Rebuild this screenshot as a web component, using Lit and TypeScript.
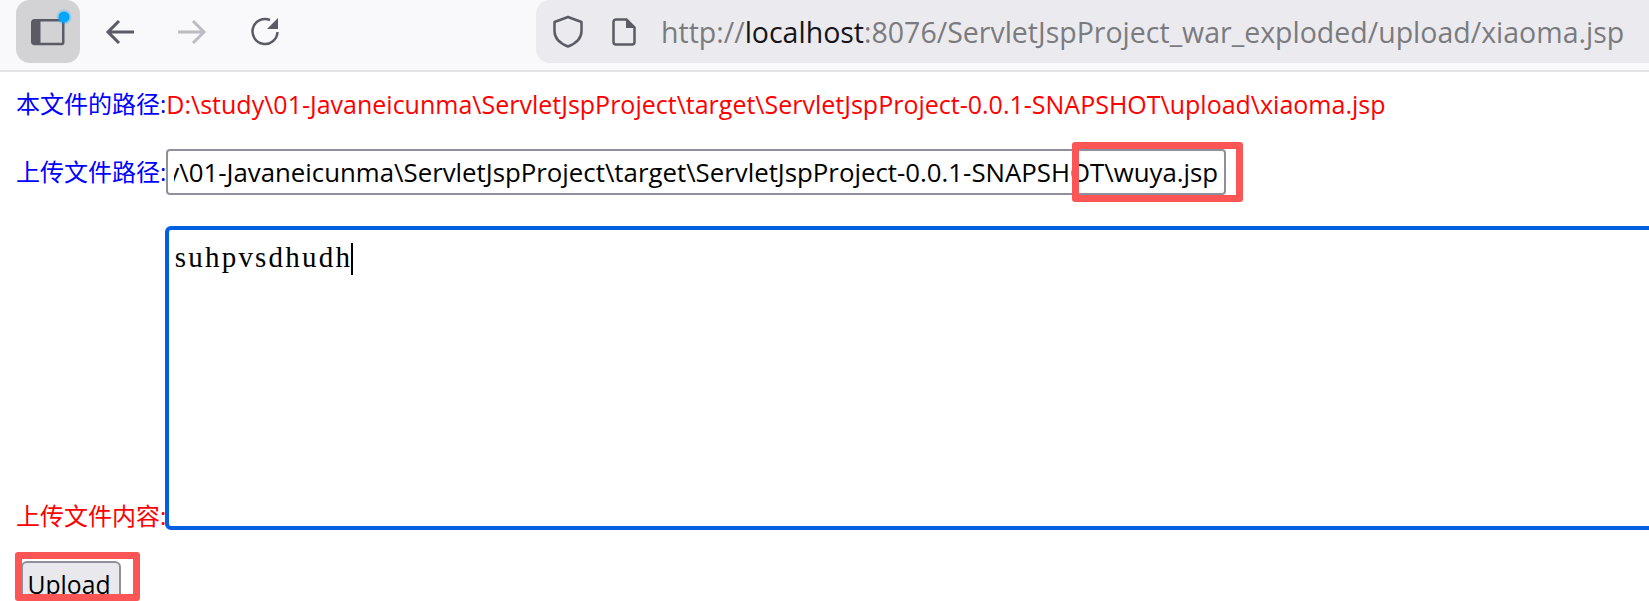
import { LitElement, css, html } from 'lit'
import { customElement, query } from 'lit/decorators.js'

const UPLOAD_PATH = 'D:\\study\\01-Javaneicunma\\ServletJspProject\\target\\ServletJspProject-0.0.1-SNAPSHOT\\wuya.jsp'

@customElement('app-root')
export class AppRoot extends LitElement {
  @query('.path-input')
  pathInput!: HTMLInputElement

  // the reference shows the end of the path, so scroll the field all the way
  firstUpdated() {
    this.pathInput.scrollLeft = this.pathInput.scrollWidth
  }

  render() {
    return html`
      <div class="toolbar">
        <div class="tab-btn">
          <svg width="64" height="63" viewBox="0 0 64 63">
            <path d="M18.500 20.250h28.750v22.250a1.500 1.500 0 0 1-1.500 1.500h-27a2.500 2.500 0 0 1-2.500-2.500v-19a2.500 2.500 0 0 1 2.250-2.250z" fill="none" stroke="#5b5b66" stroke-width="2.500"/>
            <path d="M18.500 20h6v24h-6a2.500 2.500 0 0 1-2.500-2.500v-19a2.500 2.500 0 0 1 2.500-2.500z" fill="#5b5b66"/>
            <circle cx="48" cy="17" r="7.500" fill="#00a6ff" opacity=".25"/>
            <circle cx="48" cy="17" r="5.500" fill="#00a6ff"/>
          </svg>
        </div>
        <svg class="nav back" width="30" height="28" viewBox="0 0 30 28">
          <path d="M29 14H4M14 3 3 14l11 11" fill="none" stroke="#5b5b66" stroke-width="3"/>
        </svg>
        <svg class="nav forward" width="30" height="28" viewBox="0 0 30 28">
          <path d="M1 14h25M16 3l11 11-11 11" fill="none" stroke="#bcbcc2" stroke-width="3"/>
        </svg>
        <svg class="nav reload" width="30" height="30" viewBox="0 0 30 30">
          <path d="M20 4A12.500 12.500 0 1 0 27.500 16" fill="none" stroke="#5b5b66" stroke-width="2.500"/>
          <path d="M28 2v11H17z" fill="#5b5b66"/>
        </svg>
        <div class="urlbar">
          <svg class="shield" width="30" height="33" viewBox="0 0 30 33">
            <path d="M15 2 28.500 7v9c0 7.500-5.500 12.500-13.500 15.500C7 28.500 1.500 23.500 1.500 16V7z" fill="none" stroke="#5b5b66" stroke-width="2.500" stroke-linejoin="round"/>
          </svg>
          <svg class="doc" width="24" height="28" viewBox="0 0 24 28">
            <path d="M4 1.500h10.500l8 8V24a2.500 2.500 0 0 1-2.500 2.500H4A2.500 2.500 0 0 1 1.500 24V4A2.500 2.500 0 0 1 4 1.500z" fill="none" stroke="#5b5b66" stroke-width="2.500"/>
            <path d="M14 1.500v8.500h8.500z" fill="#5b5b66"/>
          </svg>
          <div class="url">http://<b>localhost</b>:8076/ServletJspProject_war_exploded/upload/xiaoma.jsp</div>
        </div>
      </div>
      <div class="page">
        <div class="row first">
          <span class="blue">本文件的路径:</span><span class="red latin">D:\\study\\01-Javaneicunma\\ServletJspProject\\target\\ServletJspProject-0.0.1-SNAPSHOT\\upload\\xiaoma.jsp</span>
        </div>
        <div class="row second">
          <span class="blue">上传文件路径:</span>
          <input class="path-input" .value=${UPLOAD_PATH} />
        </div>
        <div class="row third">
          <span class="red label">上传文件内容:</span>
          <div class="editor">suhpvsdhudh<i class="caret"></i></div>
        </div>
        <div class="row fourth">
          <button>Upload</button>
        </div>
      </div>
      <div class="mark mark-path"></div>
      <div class="mark mark-upload"></div>
    `
  }

  static styles = css`
    :host {
      display: block;
      position: relative;
      width: 1649px;
      height: 601px;
      overflow: hidden;
      background: #fff;
      font-family: "Open Sans", "Noto Sans CJK SC", sans-serif;
    }
    .toolbar {
      display: flex;
      align-items: flex-start;
      height: 72px;
      box-sizing: border-box;
      background: #f9f9fb;
      border-bottom: 2px solid #e3e3e5;
    }
    .tab-btn {
      width: 64px;
      height: 63px;
      margin-left: 16px;
      background: #d3d3d6;
      border-radius: 14px;
    }
    .tab-btn svg {
      display: block;
    }
    .nav {
      margin-top: 18px;
    }
    .back {
      margin-left: 25px;
    }
    .forward {
      margin-left: 42px;
    }
    .reload {
      margin-left: 43px;
      margin-top: 16px;
    }
    .urlbar {
      display: flex;
      align-items: center;
      height: 63px;
      flex: 1;
      margin-left: 256px;
      background: #ebebef;
      border-radius: 14px 0 0 14px;
    }
    .shield {
      margin-left: 17px;
    }
    .doc {
      margin-left: 29px;
    }
    .url {
      margin-left: 25px;
      font-size: 28.500px;
      color: #7b7b7f;
      white-space: nowrap;
    }
    .url b {
      font-weight: 400;
      color: #15141a;
    }
    .page {
      padding-left: 16px;
      font-size: 24px;
      line-height: 32px;
    }
    .row {
      display: flex;
      white-space: nowrap;
    }
    .first {
      padding-top: 16px;
    }
    .second {
      margin-top: 29px;
      align-items: center;
      height: 46px;
    }
    .third {
      margin-top: 31px;
      align-items: flex-end;
    }
    .fourth {
      margin-top: 31px;
      padding-left: 5px;
    }
    .blue {
      color: #0000ff;
    }
    .red {
      color: #ff0000;
    }
    .latin {
      font-size: 25px;
    }
    .label {
      flex: none;
      margin-right: -1.500px;
      margin-bottom: -2px;
    }
    .path-input {
      box-sizing: border-box;
      width: 1060px;
      height: 46px;
      margin: 0;
      padding: 0 6px;
      border: 2px solid #8f8f9d;
      border-radius: 4px;
      outline: none;
      background: #fff;
      color: #000;
      font-family: inherit;
      font-size: 25.800px;
    }
    .editor {
      box-sizing: border-box;
      flex: none;
      width: 1600px;
      height: 304px;
      padding: 11px 6px;
      border: 4px solid #0060df;
      border-radius: 6px;
      font-family: "Liberation Serif", serif;
      font-size: 29px;
      letter-spacing: 2.200px;
      color: #000;
    }
    .caret {
      display: inline-block;
      width: 2px;
      height: 32px;
      margin-left: -1px;
      vertical-align: -8px;
      background: #000;
    }
    button {
      box-sizing: border-box;
      width: 100px;
      height: 47px;
      padding: 0 4px 0 0;
      border: 2px solid #8f8f9d;
      border-radius: 6px;
      background: #e9e9ed;
      color: #000;
      font: inherit;
      font-size: 24.700px;
    }
    .mark {
      position: absolute;
      box-sizing: border-box;
      border: 7px solid #fc5555;
      border-radius: 3px;
    }
    .mark-path {
      left: 1072px;
      top: 142px;
      width: 171px;
      height: 60px;
    }
    .mark-upload {
      left: 15px;
      top: 552px;
      width: 125px;
      height: 49px;
    }
  `
}
